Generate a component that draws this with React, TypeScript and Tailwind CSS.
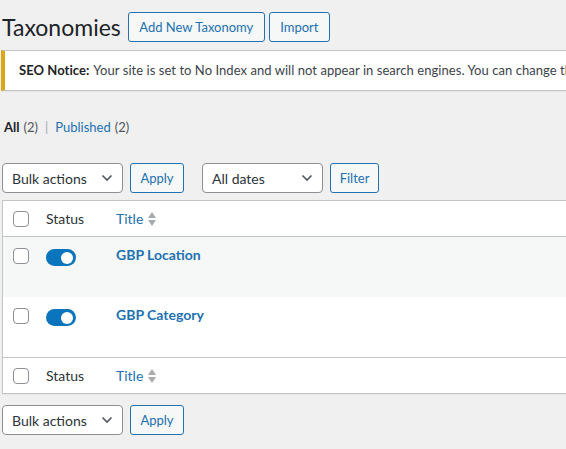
import React from "react";

const font = { fontFamily: 'Lato, "Noto Sans", sans-serif' };

function Checkbox() {
  return <div className="w-4 h-4 shrink-0 rounded-[4px] border border-[#8c8f94] bg-white" />;
}

function Toggle() {
  return (
    <div className="w-[30px] h-[17px] rounded-full bg-[#0a75bc] relative shrink-0">
      <div className="absolute right-[3px] top-[2.5px] w-[12px] h-[12px] rounded-full bg-white" />
    </div>
  );
}

function SortIcon() {
  return (
    <svg width="10" height="16" viewBox="0 0 10 16" className="ml-[4px]">
      <polygon points="5,1 9,7 1,7" fill="#a7aaad" />
      <polygon points="1,9 9,9 5,15" fill="#a7aaad" />
    </svg>
  );
}

function Chevron() {
  return (
    <svg width="12" height="8" viewBox="0 0 12 8">
      <polyline points="1.5,1.5 6,6 10.5,1.5" fill="none" stroke="#50575e" strokeWidth="1.6" />
    </svg>
  );
}

function Select({ label }: { label: string }) {
  return (
    <div className="w-[121px] h-[30px] rounded-[4px] border border-[#8c8f94] bg-white flex items-center justify-between pl-[9px] pr-[9px] text-[14px] text-[#2c3338]">
      <span>{label}</span>
      <Chevron />
    </div>
  );
}

function Button({ label, className = "" }: { label: string; className?: string }) {
  return (
    <div className={"h-[30px] pt-[2px] rounded-[3px] border border-[#2271b1] bg-[#f6f7f7] text-[#2271b1] text-[13px] flex items-center justify-center " + className}>
      {label}
    </div>
  );
}

function HeadRow({ border }: { border: "b" | "t" }) {
  return (
    <div className={"flex items-center h-[36px] " + (border === "b" ? "border-b border-[#c3c4c7]" : "border-t border-[#c3c4c7]")}>
      <div className="w-[33px] pl-[10px]"><Checkbox /></div>
      <div className="w-[70px] pl-[10px] text-[14px] text-[#2c3338]">Status</div>
      <div className="pl-[10px] flex items-center text-[14px] text-[#2271b1]">
        Title
        <SortIcon />
      </div>
    </div>
  );
}

function DataRow({ title, striped }: { title: string; striped?: boolean }) {
  return (
    <div className={"flex items-start h-[60px] " + (striped ? "bg-[#f6f7f7]" : "bg-white")}>
      <div className="w-[33px] pl-[10px] pt-[11px]"><Checkbox /></div>
      <div className="w-[70px] pl-[10px] pt-[12px]"><Toggle /></div>
      <div className="pl-[10px] pt-[8px] text-[14px] leading-[20px] font-bold text-[#2271b1]">{title}</div>
    </div>
  );
}

export default function App() {
  return (
    <div className="w-[566px] h-[449px] overflow-hidden bg-[#f0f0f1]" style={font}>
      <div className="w-[1000px] pl-[2px] pt-[12px]">
        <div className="flex items-center h-[30px]">
          <h1 className="text-[23px] text-[#1d2327] leading-[30px] mr-[7px]">Taxonomies</h1>
          <Button label="Add New Taxonomy" className="w-[137px]" />
          <Button label="Import" className="w-[61px] ml-[4px]" />
        </div>

        <div className="mt-[8px] -ml-[1px] h-[41px] bg-white border border-[#c3c4c7] border-l-4 border-l-[#dba617] shadow-[0_1px_1px_rgba(0,0,0,0.04)] flex items-center pl-[14px] text-[13px] tracking-[0.05px] text-[#3c434a] whitespace-nowrap">
          <span className="font-bold text-[#1d2327] mr-[4px]">SEO Notice:</span>
          Your site is set to No Index and will not appear in search engines. You can change the settings here.
        </div>

        <div className="mt-[27px] h-[20px] flex items-center text-[13px] pl-[2px]">
          <span className="font-bold text-[#1d2327]">All</span>
          <span className="text-[#50575e] ml-[4px]">(2)</span>
          <span className="text-[#a7aaad] mx-[7px]">|</span>
          <span className="text-[#2271b1]">Published</span>
          <span className="text-[#50575e] ml-[4px]">(2)</span>
        </div>

        <div className="mt-[25px] flex items-center">
          <Select label="Bulk actions" />
          <Button label="Apply" className="w-[54px] ml-[7px]" />
          <div className="ml-[18px]"><Select label="All dates" /></div>
          <Button label="Filter" className="w-[49px] ml-[7px]" />
        </div>

        <div className="mt-[7px] w-[900px] bg-white border border-[#c3c4c7] shadow-[0_1px_1px_rgba(0,0,0,0.04)]">
          <HeadRow border="b" />
          <DataRow title="GBP Location" striped />
          <DataRow title="GBP Category" />
          <HeadRow border="t" />
        </div>

        <div className="mt-[11px] flex items-center">
          <Select label="Bulk actions" />
          <Button label="Apply" className="w-[54px] ml-[7px]" />
        </div>
      </div>
    </div>
  );
}
